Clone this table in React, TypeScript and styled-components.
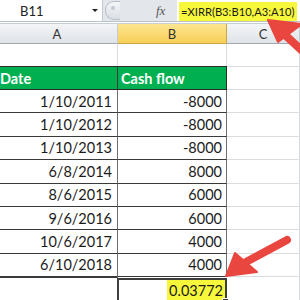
import React from 'react';
import styled, { createGlobalStyle } from 'styled-components';

const GlobalStyle = createGlobalStyle`
  html, body {
    margin: 0;
    padding: 0;
    background: #ffffff;
    width: 300px;
    height: 300px;
    overflow: hidden;
  }
  body {
    font-family: Lato, "Liberation Sans", sans-serif;
  }
`;

const dates = ['1/10/2011', '1/10/2012', '1/10/2013', '6/8/2014', '8/6/2015', '9/6/2016', '10/6/2017', '6/10/2018'];
const flows = ['-8000', '-8000', '-8000', '8000', '6000', '6000', '4000', '4000'];

const Arrows = () => (
  <Overlay width="300" height="300" viewBox="0 0 300 300">
    <g fill="#e8463f" stroke="#e8463f" strokeLinecap="round" strokeLinejoin="round">
      <line x1="284" y1="34" x2="310" y2="58" strokeWidth="8" />
      <polygon points="268,20 302,24 278,42" strokeWidth="2" />
      <line x1="246" y1="262" x2="287" y2="240" strokeWidth="8" />
      <polygon points="226,276 235,253 257,272" strokeWidth="2" />
    </g>
  </Overlay>
);

const App: React.FC = () => (
  <Page>
    <GlobalStyle />
    <FormulaBar>
      <NameBox>
        <span>B11</span>
        <DropArrow />
      </NameBox>
      <Splitter>
        <Knob />
        <FxLabel>fx</FxLabel>
      </Splitter>
      <FormulaInput>
        <Highlight>=XIRR(B3:B10,A3:A10)</Highlight>
      </FormulaInput>
    </FormulaBar>
    <ColumnHeaders>
      <ColHead>A</ColHead>
      <ColHead $selected>B</ColHead>
      <ColHead>C</ColHead>
    </ColumnHeaders>
    <Sheet>
      <Cell />
      <Cell />
      <Cell />

      <HeadCell>Date</HeadCell>
      <HeadCell $last>Cash flow</HeadCell>
      <Cell />

      {dates.map((d, i) => (
        <React.Fragment key={d}>
          <DataCell>{d}</DataCell>
          <DataCell $last>{flows[i]}</DataCell>
          <Cell />
        </React.Fragment>
      ))}

      <TotalCell />
      <SelectedCell>
        <Highlight>0.03772</Highlight>
        <FillHandle />
      </SelectedCell>
      <Cell />
    </Sheet>
    <Arrows />
  </Page>
);

export default App;

const Page = styled.div`
  position: relative;
  width: 300px;
  height: 300px;
  overflow: hidden;
  display: flex;
  flex-direction: column;
  color: #1b1b1b;
`;

const Overlay = styled.svg`
  position: absolute;
  left: 0;
  top: 0;
  pointer-events: none;
`;

const FormulaBar = styled.div`
  display: flex;
  height: 21px;
  flex-shrink: 0;
  background: #e3e7ec;
  border-bottom: 1px solid #b9c1cb;
`;

const NameBox = styled.div`
  width: 103px;
  flex-shrink: 0;
  background: #ffffff;
  border-right: 1px solid #c4cad2;
  display: flex;
  align-items: center;
  justify-content: space-between;
  padding: 0 4px 0 20px;
  box-sizing: border-box;
  font-size: 13px;
  color: #222;
`;

const DropArrow = styled.span`
  width: 0;
  height: 0;
  border-left: 3px solid transparent;
  border-right: 3px solid transparent;
  border-top: 3px solid #222;
`;

const Splitter = styled.div`
  width: 74px;
  flex-shrink: 0;
  display: flex;
  align-items: center;
  gap: 36px;
  padding-left: 2px;
  box-sizing: border-box;
`;

const Knob = styled.span`
  width: 14px;
  height: 17px;
  flex-shrink: 0;
  border-radius: 9px 0 0 9px;
  background: linear-gradient(#f4f6f8, #d9dee4);
  border: 1px solid #b6bec8;
  border-right: none;
  position: relative;

  &::after {
    content: '';
    position: absolute;
    left: 5px;
    top: 4px;
    width: 4px;
    height: 4px;
    border-radius: 50%;
    background: #c3c9d0;
  }
`;

const FxLabel = styled.span`
  font-family: "Liberation Serif", serif;
  font-style: italic;
  font-size: 13px;
  color: #555;
`;

const FormulaInput = styled.div`
  flex: 1;
  min-width: 0;
  background: #ffffff;
  display: flex;
  align-items: stretch;
  padding: 2px 0 0 2px;
  font-size: 11.2px;
  white-space: nowrap;
`;

const Highlight = styled.span`
  background: #f7f73c;
  display: flex;
  align-items: center;
  padding: 0 2px;
  white-space: nowrap;
`;

const ColumnHeaders = styled.div`
  display: grid;
  grid-template-columns: 121px 109px 1fr;
  margin-left: -3px;
  margin-top: 1px;
  height: 20px;
  flex-shrink: 0;
  border-top: 1px solid #c7ced6;
`;

const ColHead = styled.div<{ $selected?: boolean }>`
  display: flex;
  align-items: center;
  justify-content: center;
  font-size: 13px;
  color: #333;
  border-right: 1px solid ${(p) => (p.$selected ? '#c9a64a' : '#c6ccd3')};
  border-bottom: 1px solid ${(p) => (p.$selected ? '#c9a64a' : '#9fa8b3')};
  background: ${(p) =>
    p.$selected
      ? 'linear-gradient(#fde690, #f7cf58)'
      : 'linear-gradient(#f3f5f7, #dfe3e8)'};
`;

const Sheet = styled.div`
  display: grid;
  grid-template-columns: 121px 109px 1fr;
  grid-template-rows: 23px 23px repeat(8, 23.4px) 26px;
  margin-left: -3px;
  font-size: 14.5px;
`;

const Cell = styled.div`
  border-right: 1px solid #dadcdd;
  border-bottom: 1px solid #dadcdd;
`;

const HeadCell = styled.div<{ $last?: boolean }>`
  background: #00b050;
  color: #ffffff;
  font-weight: 700;
  display: flex;
  align-items: center;
  padding-left: 3px;
  border-top: 1px solid #2b2b2b;
  border-bottom: 1px solid #2b2b2b;
  border-right: 1px solid ${(p) => (p.$last ? '#2b2b2b' : '#3a3a3a')};
  margin-top: -1px;
`;

const DataCell = styled.div<{ $last?: boolean }>`
  display: flex;
  align-items: center;
  justify-content: flex-end;
  padding-right: ${(p) => (p.$last ? '4px' : '5px')};
  border-bottom: 1px solid #3a3a3a;
  border-right: 1px solid #707070;
`;

const TotalCell = styled.div`
  border-top: 1px solid #3a3a3a;
  border-right: 1px solid #707070;
`;

const SelectedCell = styled.div`
  position: relative;
  display: flex;
  align-items: stretch;
  justify-content: flex-end;
  border: 2px solid #3d3d3d;
  margin: 1px 0 0 -1px;
`;

const FillHandle = styled.span`
  position: absolute;
  right: -4px;
  bottom: -4px;
  width: 5px;
  height: 5px;
  background: #3d3d3d;
  border: 1px solid #ffffff;
`;
